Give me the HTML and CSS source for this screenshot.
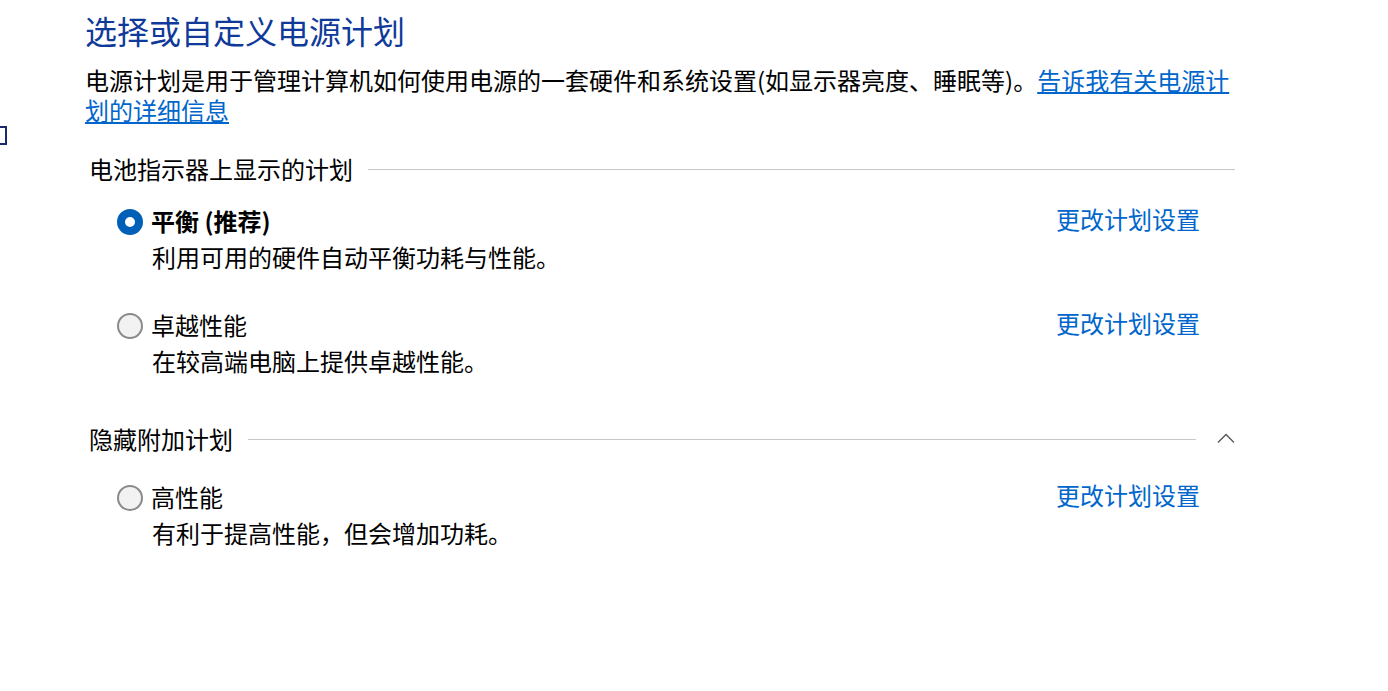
FILE: index.html
```html
<!DOCTYPE html>
<html>
<head lang="zh">
    <meta charset="UTF-8">
    <title>电源选项</title>
    <link rel="stylesheet" href="styles.css">
</head>
<body>
<div class="edge"></div>
<div class="page">
    <h1 class="title">选择或自定义电源计划</h1>
    <p class="intro">电源计划是用于管理计算机如何使用电源的一套硬件和系统设置(如显示器亮度、睡眠等)。<a href="#">告诉我有关电源计划的详细信息</a></p>

    <!--电池指示器上显示的计划-->
    <div class="group first">
        <div class="group-head">
            <span>电池指示器上显示的计划</span>
            <i class="rule"></i>
        </div>
        <div class="plan">
            <span class="radio checked"></span>
            <div class="plan-text">
                <div class="plan-name bold">平衡 (推荐)</div>
                <div class="plan-desc">利用可用的硬件自动平衡功耗与性能。</div>
            </div>
            <a class="plan-link" href="#">更改计划设置</a>
        </div>
        <div class="plan">
            <span class="radio"></span>
            <div class="plan-text">
                <div class="plan-name">卓越性能</div>
                <div class="plan-desc">在较高端电脑上提供卓越性能。</div>
            </div>
            <a class="plan-link" href="#">更改计划设置</a>
        </div>
    </div>

    <!--隐藏附加计划-->
    <div class="group second">
        <div class="group-head">
            <span>隐藏附加计划</span>
            <i class="rule"></i>
            <svg class="chevron" width="18" height="12" viewBox="0 0 18 12">
                <path d="M1 10.5 L9 2.5 L17 10.5" fill="none" stroke="#555" stroke-width="1.3"/>
            </svg>
        </div>
        <div class="plan">
            <span class="radio"></span>
            <div class="plan-text">
                <div class="plan-name">高性能</div>
                <div class="plan-desc">有利于提高性能，但会增加功耗。</div>
            </div>
            <a class="plan-link" href="#">更改计划设置</a>
        </div>
    </div>
</div>
</body>
</html>
```

FILE: styles.css
```css
* {
    margin: 0;
    padding: 0;
    box-sizing: border-box;
}

body {
    font-family: "Noto Sans CJK SC", "Microsoft YaHei", sans-serif;
    color: #000;
    background-color: #fff;
}

a {
    color: #0066cc;
}

.edge {
    position: absolute;
    left: -10px;
    top: 126px;
    width: 17px;
    height: 19px;
    border: 2px solid #1c2a6b;
}

.page {
    width: 1235px;
    padding: 10px 0 0 85px;
}

.title {
    font-size: 32px;
    font-weight: normal;
    line-height: 40px;
    color: #0f3a9a;
}

.intro {
    margin-top: 15px;
    font-size: 24px;
    line-height: 30px;
}

.group-head {
    display: flex;
    align-items: center;
    padding-left: 4px;
    font-size: 24px;
    line-height: 30px;
}

.group-head .rule {
    flex: 1;
    height: 1px;
    margin-left: 15px;
    background-color: #c8c8c8;
}

.first {
    margin-top: 29px;
}

.first .group-head {
    margin-bottom: 19px;
}

.second {
    margin-top: 45px;
}

.second .group-head .rule {
    margin-right: 21px;
}

.second .group-head {
    margin-bottom: 25px;
}

.chevron {
    display: block;
    margin-top: -3px;
}

.plan {
    display: flex;
    align-items: flex-start;
    padding: 0 35px 0 32px;
    margin-bottom: 32px;
}

.radio {
    width: 26px;
    height: 26px;
    margin: 6px 8px 0 0;
    border: 2px solid #8a8a8a;
    border-radius: 50%;
    background-color: #f2f2f2;
    flex-shrink: 0;
}

.radio.checked {
    border: 8.5px solid #0060b8;
    background-color: #fff;
}

.plan-text {
    flex: 1;
}

.plan-name,
.plan-desc,
.plan-link {
    font-size: 24px;
    line-height: 36px;
}

.plan-link {
    margin-top: -2px;
    text-decoration: none;
}

.plan-desc {
    padding-left: 1px;
}

.bold {
    font-weight: bold;
}
```
